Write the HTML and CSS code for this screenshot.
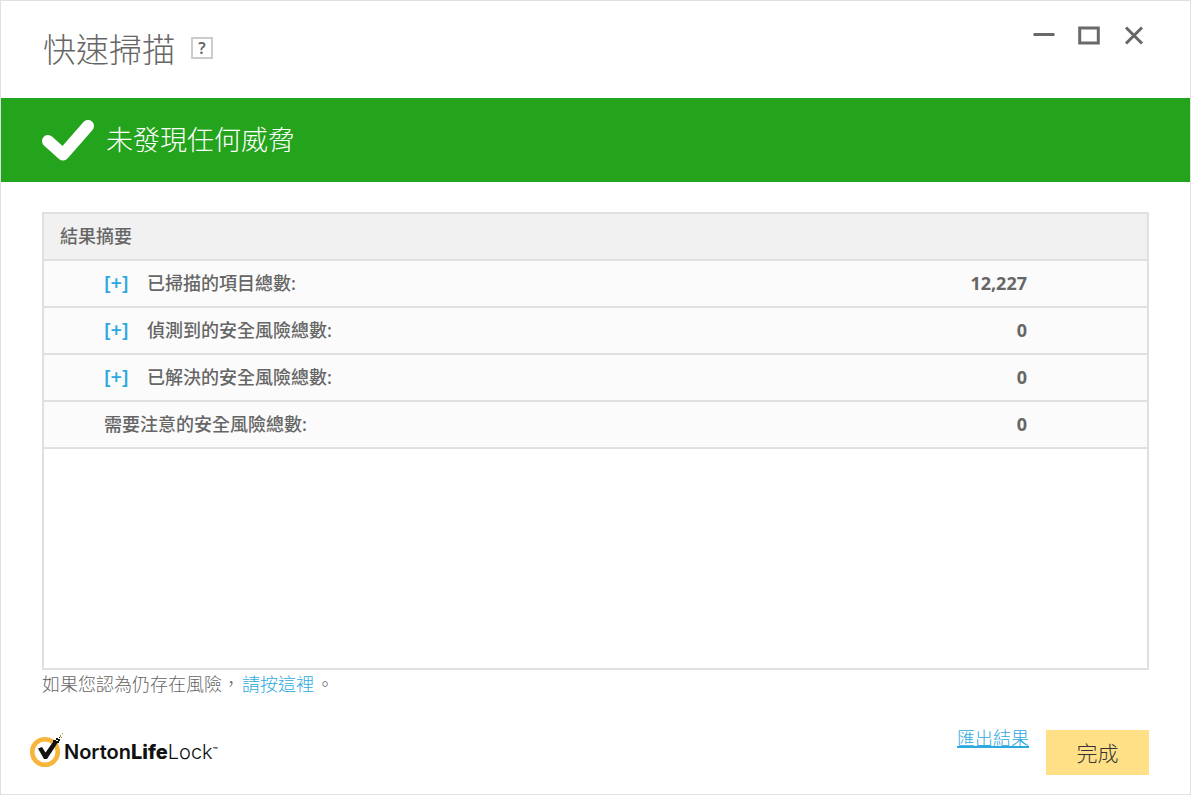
FILE: index.html
```html
<!DOCTYPE html>
<html lang="zh-Hant">
<head>
    <meta charset="UTF-8">
    <meta name="viewport" content="width=device-width, initial-scale=1.0">
    <title>快速掃描</title>
    <link rel="stylesheet" href="styles.css">
</head>
<body>
    <div class="window">
        <header class="header">
            <div class="title">
                <h1>快速掃描</h1>
                <button type="button" class="help-btn">?</button>
            </div>
            <div class="window-btns">
                <button type="button" aria-label="最小化">
                    <svg width="22" height="22" viewBox="0 0 22 22"><path d="M0.5 9.5h21" stroke="#6a6a6a" stroke-width="3"/></svg>
                </button>
                <button type="button" aria-label="最大化">
                    <svg width="22" height="22" viewBox="0 0 22 22"><path d="M1.7 3h18.6v15h-18.6z" fill="none" stroke="#6a6a6a" stroke-width="3"/></svg>
                </button>
                <button type="button" aria-label="關閉">
                    <svg width="22" height="22" viewBox="0 0 22 22"><path d="M3 2.500l16 16M19 2.500L3 18.500" stroke="#666" stroke-width="3"/></svg>
                </button>
            </div>
        </header>

        <div class="banner">
            <svg width="52" height="42" viewBox="0 0 52 42"><path d="M6 22L21 35.500L46 7" fill="none" stroke="#fff" stroke-width="12" stroke-linecap="round" stroke-linejoin="round"/></svg>
            <p>未發現任何威脅</p>
        </div>

        <main class="content">
            <div class="results">
                <table>
                    <thead>
                        <tr>
                            <th colspan="2">結果摘要</th>
                        </tr>
                    </thead>
                    <tbody>
                        <tr>
                            <td><button type="button" class="expand-btn">[+]</button>已掃描的項目總數:</td>
                            <td class="count">12,227</td>
                        </tr>
                        <tr>
                            <td><button type="button" class="expand-btn">[+]</button>偵測到的安全風險總數:</td>
                            <td class="count">0</td>
                        </tr>
                        <tr>
                            <td><button type="button" class="expand-btn">[+]</button>已解決的安全風險總數:</td>
                            <td class="count">0</td>
                        </tr>
                        <tr>
                            <td>需要注意的安全風險總數:</td>
                            <td class="count">0</td>
                        </tr>
                    </tbody>
                </table>
            </div>
            <p class="note">如果您認為仍存在風險，<a href="#">請按這裡</a>。</p>
        </main>

        <footer class="footer">
            <div class="logo">
                <svg width="34" height="36" viewBox="0 0 34 36">
                    <circle cx="15" cy="19" r="12.8" fill="none" stroke="#f6b63c" stroke-width="4.6"/>
                    <path d="M8 15.500l4-1.500l3.500 5.500L23 9l4.500 1L17 26h-3z" fill="#111"/>
                    <path d="M23 7h3v3h-3zM26 5h2v2h-2zM26 8h3v2h-3zM28 6h2v2h-2zM29 4h1v1h-1z" fill="#111"/>
                    <path d="M30 2h1v2h-1zM32 0h1v1h-1zM31 4h1v1h-1z" fill="#b98a3a"/>
                </svg>
                <span class="logo-text">Norton<b>Life</b><i>Lock</i><small>™</small></span>
            </div>
            <div class="actions">
                <a href="#">匯出結果</a>
                <button type="button" class="done-btn">完成</button>
            </div>
        </footer>
    </div>
</body>
</html>
```
FILE: styles.css
```css
* {
    box-sizing: border-box;
}
body {
    margin: 0;
    font-family: "Noto Sans", "Noto Sans CJK TC", sans-serif;
    font-size: 18px;
    font-weight: 300;
    line-height: 28px;
    color: #666;
    background-color: #fff;
}
h1, p {
    margin: 0;
    font-weight: 300;
}
button {
    padding: 0;
    border: none;
    background: none;
    font-family: inherit;
    color: inherit;
    cursor: pointer;
}
svg {
    display: block;
}
a {
    color: #2ea9e0;
}
.window {
    display: flex;
    flex-direction: column;
    min-height: 100vh;
    border: 1px solid #e0e0e0;
}

/* Title bar */
.header {
    display: flex;
    justify-content: space-between;
    align-items: flex-start;
    height: 97px;
    padding: 24px 45px 0 42px;
}
.title {
    display: flex;
    align-items: flex-end;
    gap: 16px;
}
.title h1 {
    font-size: 33px;
    line-height: 50px;
}
.help-btn {
    width: 22px;
    height: 22px;
    margin-bottom: 16px;
    border: 2px solid #ccc;
    font-size: 16px;
    font-weight: 600;
    line-height: 18px;
}
.window-btns {
    display: flex;
    gap: 23px;
}

/* Scan status */
.banner {
    display: flex;
    align-items: center;
    gap: 12px;
    height: 84px;
    padding: 0 41px;
    color: #fff;
    background-color: #24a31c;
}
.banner p {
    font-size: 27px;
    line-height: 40px;
}

.content {
    flex: 1;
    display: flex;
    flex-direction: column;
    padding: 30px 41px 0;
}
.results {
    flex: 1;
    border: 2px solid #e0e0e0;
}
table {
    width: 100%;
    border-spacing: 0;
}
th, td {
    height: 47px;
    padding: 0 0 2px;
    border-bottom: 2px solid #e0e0e0;
    font-weight: 500;
    text-align: left;
}
th {
    padding-left: 16px;
    background-color: #f1f1f1;
}
td {
    padding-left: 60px;
    background-color: #fbfbfb;
}
.expand-btn {
    width: 43px;
    font-size: 20px;
    font-weight: 600;
    text-align: left;
    color: #2ea9e0;
}
.count {
    padding-right: 120px;
    font-weight: 700;
    text-align: right;
}
.note a {
    margin: 0 2px;
    text-decoration: none;
}

/* Bottom bar */
.footer {
    display: flex;
    justify-content: space-between;
    padding: 32px 41px 19px 29px;
}
.logo {
    display: flex;
    align-items: center;
    padding-bottom: 3px;
}
.logo-text {
    font-family: Inter, sans-serif;
    font-size: 20px;
    font-weight: 600;
    color: #111;
}
.logo-text b {
    font-weight: 800;
}
.logo-text i {
    font-style: normal;
    font-weight: 300;
}
.logo-text small {
    font-size: 8px;
    vertical-align: 6px;
}
.actions {
    display: flex;
    gap: 17px;
}
.actions a {
    line-height: 16px;
    text-decoration-thickness: 2px;
}
.done-btn {
    width: 103px;
    height: 45px;
    padding-bottom: 2px;
    font-size: 21px;
    font-weight: 300;
    color: #333;
    background-color: #ffe087;
}
```
